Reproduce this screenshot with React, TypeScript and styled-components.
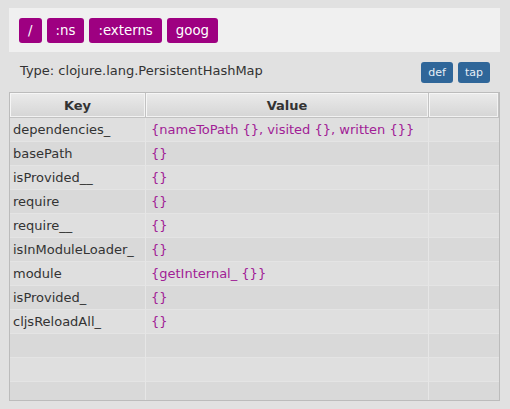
import React from "react";
import styled, { createGlobalStyle } from "styled-components";

const Global = createGlobalStyle`
  html, body { margin: 0; padding: 0; background: #e1e1e1; }
  body { font-family: "DejaVu Sans", Verdana, sans-serif; font-size: 13px; color: #333; }
`;

const Page = styled.div`
  padding: 8px 10px 0 9px;
  display: flex;
  flex-direction: column;
`;

const Toolbar = styled.div`
  background: #f0f0f0;
  height: 44px;
  box-sizing: border-box;
  padding: 10px 10px 0 10px;
  display: flex;
  gap: 5px;
  align-items: flex-start;
`;

const Crumb = styled.button`
  font-family: "DejaVu Sans", sans-serif;
  font-size: 13.33px;
  height: 25px;
  padding: 0 9px;
  border: none;
  border-radius: 3px;
  background: #9e0081;
  color: #fff;
  display: flex;
  align-items: center;
  justify-content: center;
  cursor: pointer;
`;

const InfoRow = styled.div`
  height: 40px;
  display: flex;
  align-items: center;
  justify-content: space-between;
  padding: 0 10px 0 11px;
`;

const TypeLabel = styled.span`
  color: #333;
  font-size: 13px;
  margin-top: -3px;
`;

const Actions = styled.div`
  display: flex;
  gap: 5px;
`;

const ActionBtn = styled.button`
  font-family: "DejaVu Sans", sans-serif;
  font-size: 11px;
  height: 21px;
  padding: 0 7px;
  border: none;
  border-radius: 3px;
  background: #2f6699;
  color: #e6eef6;
  display: flex;
  align-items: center;
  cursor: pointer;
`;

const GridBox = styled.div`
  border: 1px solid #bcbcbc;
  height: 307px;
  overflow: hidden;
  background: #e1e1e1;
`;

const Table = styled.div`
  display: grid;
  grid-template-columns: 136px 283px 1fr;
`;

const Head = styled.div`
  height: 25px;
  box-sizing: border-box;
  background: linear-gradient(#ebebeb, #d5d5d5);
  border-right: 1px solid #c2c2c2;
  border-bottom: 1px solid #c2c2c2;
  box-shadow: inset 1px 1px 0 #f6f6f6, inset -1px -1px 0 #f2f2f2;
  font-weight: bold;
  font-size: 13px;
  color: #333;
  display: flex;
  align-items: center;
  justify-content: center;
  &:last-child { border-right: none; }
`;

const Cell = styled.div<{ $odd: boolean; $last?: boolean; $value?: boolean }>`
  height: 24px;
  box-sizing: border-box;
  background: ${(p) => (p.$odd ? "#d9d9d9" : "#dfdfdf")};
  border-right: ${(p) => (p.$last ? "none" : "1px solid #e6e6e6")};
  border-bottom: 1px solid #e4e4e4;
  padding: 0 ${(p) => (p.$value ? "5px" : "3px")};
  display: flex;
  align-items: center;
  white-space: nowrap;
  overflow: hidden;
  color: ${(p) => (p.$value ? "#a11d96" : "#333")};
  font-size: 13px;
`;

const rows: [string, string][] = [
  ["dependencies_", "{nameToPath {}, visited {}, written {}}"],
  ["basePath", "{}"],
  ["isProvided__", "{}"],
  ["require", "{}"],
  ["require__", "{}"],
  ["isInModuleLoader_", "{}"],
  ["module", "{getInternal_ {}}"],
  ["isProvided_", "{}"],
  ["cljsReloadAll_", "{}"],
  ["", ""],
  ["", ""],
  ["", ""],
  ["", ""],
];

export default function App() {
  return (
    <>
      <Global />
      <Page>
        <Toolbar>
          <Crumb>/</Crumb>
          <Crumb>:ns</Crumb>
          <Crumb>:externs</Crumb>
          <Crumb>goog</Crumb>
        </Toolbar>
        <InfoRow>
          <TypeLabel>Type: clojure.lang.PersistentHashMap</TypeLabel>
          <Actions>
            <ActionBtn>def</ActionBtn>
            <ActionBtn>tap</ActionBtn>
          </Actions>
        </InfoRow>
        <GridBox>
          <Table>
            <Head>Key</Head>
            <Head>Value</Head>
            <Head />
            {rows.map(([k, v], i) => (
              <React.Fragment key={i}>
                <Cell $odd={i % 2 === 1}>{k}</Cell>
                <Cell $odd={i % 2 === 1} $value>{v}</Cell>
                <Cell $odd={i % 2 === 1} $last />
              </React.Fragment>
            ))}
          </Table>
        </GridBox>
      </Page>
    </>
  );
}
